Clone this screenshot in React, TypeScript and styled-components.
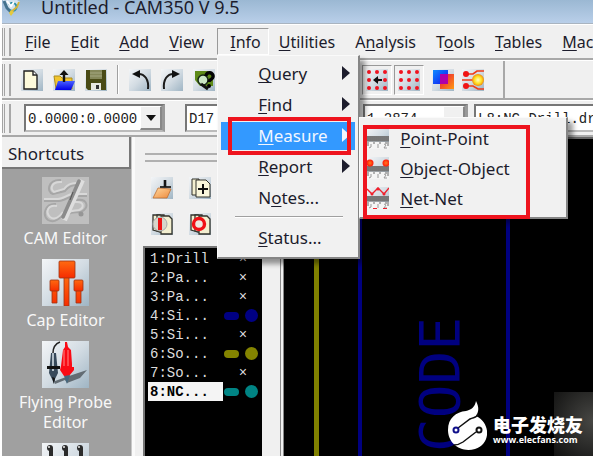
import React from "react";
import styled, { createGlobalStyle, css } from "styled-components";

const ui = `"Noto Sans", "Open Sans", sans-serif`;
const mono = `"Liberation Mono", "DejaVu Sans Mono", monospace`;

const Global = createGlobalStyle`
  * { box-sizing: border-box; }
  html, body { margin: 0; background: #fff; overflow: hidden; }
  button, input, select { font: inherit; color: inherit; border: 0; padding: 0; margin: 0; background: none; border-radius: 0; }
  svg { display: block; }
  u { text-underline-offset: 2px; text-decoration-skip-ink: none; }
`;

const Window = styled.div`
  display: flex;
  flex-direction: column;
  height: 100vh;
  margin-left: 2px;
  overflow: hidden;
  background: #f0f0f0;
  font-family: ${ui};
  font-size: 16px;
  color: #1c1c2c;
`;

const TitleBar = styled.header`
  display: flex;
  flex: none;
  gap: 20px;
  height: 24px;
  background: linear-gradient(#9bb8d3, #b9cfe9);
  border-bottom: 1px solid #a9b4c0;
`;

const Title = styled.h1`
  margin: 0;
  font-size: 18px;
  font-weight: 400;
  line-height: 14px;
  white-space: nowrap;
`;

const Bar = styled.div<{ $height: number }>`
  display: flex;
  flex: none;
  align-items: center;
  height: ${(p) => p.$height}px;
  border-top: 1px solid #fff;
  border-bottom: 2px solid #a8a8a8;
`;

const Grip = styled.span`
  flex: none;
  align-self: stretch;
  width: 9px;
  margin: 3px 0 2px;
  border-left: 3px double #a4a4a4;
  border-right: 2px solid #a8a8a8;
`;

const MenuBar = styled(Bar).attrs({ as: "nav" })`
  position: relative;
  z-index: 5;
`;

const Menus = styled.div`
  display: flex;
  padding-left: 4px;
`;

const MenuSlot = styled.div`
  position: relative;
  flex: none;
  margin-left: 3px;
`;

const MenuButton = styled.button<{ $open?: boolean }>`
  flex: none;
  height: 27px;
  padding: 0 10px;
  line-height: 24px;
  white-space: nowrap;
  ${(p) =>
    p.$open &&
    css`
      padding: 1px 7px 0 12px;
      border: 1px solid #fff;
      border-top-color: #999;
      border-left-color: #999;
    `}
`;

const menuPanel = css`
  position: absolute;
  z-index: 2;
  background: #f1f1f1;
  border: 1px solid #fafafa;
  border-right: 2px solid #858585;
  border-bottom: 2px solid #858585;
  box-shadow: 5px 5px 5px rgba(0, 0, 0, 0.4);
`;

const Dropdown = styled.div`
  ${menuPanel}
  top: 27px;
  left: 0;
  width: 143px;
  padding: 4px 3px 2px;
`;

const Submenu = styled.div`
  ${menuPanel}
  top: -5px;
  left: 138px;
  width: 209px;
  padding: 5px 7px 4px;
  color: #1c1c2c;
`;

const Row = styled.div<{ $active?: boolean }>`
  position: relative;
  margin-bottom: 3px;
  background: ${(p) => (p.$active ? "#3399ff" : "none")};
  color: ${(p) => (p.$active ? "#f2f6ff" : "inherit")};
`;

const Command = styled.button`
  display: flex;
  align-items: center;
  justify-content: space-between;
  width: 100%;
  height: 28px;
  padding: 0 5px 2px 37px;
  font-size: 17px;
  text-align: left;
`;

const SubCommand = styled(Command)`
  justify-content: flex-start;
  gap: 11px;
  height: 30px;
  padding: 0;
`;

const Separator = styled.hr`
  height: 2px;
  margin: 4px 12px 6px 14px;
  border: 0;
  border-top: 1px solid #a0a0a0;
  background: #fff;
`;

const Highlight = styled.span<{ $wide?: boolean }>`
  position: absolute;
  z-index: 3;
  inset: ${(p) => (p.$wide ? "7px 36px -2px 3px" : "-5px 4px -5px 7px")};
  border: 4px solid #ee141e;
  pointer-events: none;
`;

const Tools = styled.div`
  display: flex;
  align-items: center;
  gap: 10px;
  padding: 0 10px;
`;

const ToolButton = styled.button<{ $pressed?: boolean }>`
  flex: none;
  width: 22px;
  height: 22px;
  ${(p) =>
    p.$pressed &&
    css`
      display: grid;
      place-items: center;
      width: 30px;
      height: 30px;
      border: 1px solid #fff;
      border-top-color: #999;
      border-left-color: #999;
    `}
`;

const ToolDivider = styled.span`
  width: 2px;
  height: 29px;
  border-left: 1px solid #a0a0a0;
  background: #fff;
`;

const DisplayTools = styled(Tools)`
  align-self: stretch;
  gap: 8px;
  margin-left: 137px;
  padding: 0 19px 0 0;
  border-right: 2px solid #a8a8a8;
`;

const PressedPair = styled.div`
  display: flex;
  gap: 2px;
`;

const Fields = styled.div`
  display: flex;
  flex: 1;
  gap: 6px;
  padding-left: 13px;
  font-family: ${mono};
  font-size: 14px;
  color: #222;
`;

const Field = styled.div<{ $width?: number; $after?: number }>`
  display: flex;
  flex: ${(p) => (p.$width ? "none" : "1 0 140px")};
  width: ${(p) => (p.$width ? `${p.$width}px` : "auto")};
  height: 28px;
  margin-right: ${(p) => p.$after ?? 0}px;
  background: #fff;
  border: 2px solid #777;
  border-right: 3px solid #999;
  border-bottom-color: #bbb;

  input, select {
    flex: 1;
    min-width: 0;
    padding: 2px 0 0 2px;
    appearance: none;
    outline: 0;
  }
`;

const FieldArrow = styled.button`
  display: grid;
  place-items: center;
  flex: none;
  width: 22px;
  background: #f0f0f0;
  border: 1px solid #fff;
  border-right: 2px solid #888;
  border-bottom: 2px solid #888;
`;

const Body = styled.main`
  display: flex;
  flex: 1;
  min-height: 0;
`;

const Sidebar = styled.aside`
  flex: none;
  width: 130px;
  overflow: hidden;
  background: #a0a0a0;
  border-right: 1px solid #c8c8c8;
`;

const SidebarHeading = styled.h2`
  margin: 0;
  height: 32px;
  padding: 3px 6px 0;
  background: #f0f0f0;
  border-right: 2px solid #777;
  border-bottom: 2px solid #777;
  font-size: 17px;
  font-weight: 400;
  line-height: 28px;
`;

const Shortcut = styled.button`
  display: flex;
  flex-direction: column;
  align-items: center;
  gap: 4px;
  width: 100%;
  padding: 0 10px 0 8px;
  margin-top: 11px;
  color: #f8f8f8;
  font-size: 16px;
  line-height: 20px;

  &:first-of-type { margin-top: 8px; }
`;

const LayerPane = styled.section`
  display: flex;
  flex-direction: column;
  flex: none;
  width: 152px;
  padding: 0 18px 0 8px;
  border-left: 3px solid #fafafa;
  border-right: 4px double #888;
  background: #f0f0f0;
`;

const PaneGrip = styled.div`
  flex: none;
  height: 9px;
  margin: 16px 45px 0 2px;
  border-top: 2px solid #b0b0b0;
  border-bottom: 2px solid #b0b0b0;
`;

const LayerTools = styled.div`
  display: grid;
  grid-template-columns: 22px 22px;
  gap: 14px 16px;
  padding: 15px 8px 11px;
`;

const LayerList = styled.ul`
  flex: 1;
  min-height: 0;
  width: 119px;
  margin: 0;
  padding: 1px 0 0 3px;
  overflow: hidden;
  list-style: none;
  background: #000;
  border-top: 2px solid #777;
  border-left: 2px solid #777;
  color: #dcdcdc;
  font-family: ${mono};
  font-size: 14px;
`;

const Layer = styled.li`
  display: flex;
  align-items: center;
  height: 19px;
`;

const LayerName = styled.button<{ $selected?: boolean }>`
  width: 75px;
  height: 19px;
  padding-left: 2px;
  text-align: left;
  white-space: nowrap;
  background: ${(p) => (p.$selected ? "#f4f4f4" : "none")};
  color: ${(p) => (p.$selected ? "#000" : "inherit")};
  font-weight: ${(p) => (p.$selected ? 700 : 400)};
`;

const LayerMark = styled.span<{ $color?: string }>`
  display: flex;
  flex: 1;
  align-items: center;
  justify-content: ${(p) => (p.$color ? "flex-start" : "center")};
  gap: 6px;
  padding-left: 1px;
  color: ${(p) => p.$color ?? "#dcdcdc"};
`;

const Trace = styled.i`
  width: 15px;
  height: 8px;
  border-radius: 4px;
  background: currentColor;
`;

const Pad = styled.i`
  width: 13px;
  height: 13px;
  border-radius: 50%;
  background: currentColor;
`;

const Canvas = styled.section`
  position: relative;
  flex: 1;
  min-width: 0;
  overflow: hidden;
  background: #000;
  border-top: 2px solid #666;
`;

const Glow = styled.div`
  position: absolute;
  right: 0;
  bottom: 0;
  width: 39px;
  height: 64px;
  background: radial-gradient(circle at 100% 45%, #474744, #1b1b1a 80%, #111);
`;

const Brand = styled.div`
  position: absolute;
  right: 10px;
  bottom: 6px;
  display: flex;
  align-items: flex-end;
  gap: 6px;
  color: #fff;
  white-space: nowrap;
`;

const BrandText = styled.div`
  display: flex;
  flex-direction: column;
  padding-bottom: 4px;

  strong {
    font: 900 18px/20px "Noto Sans CJK SC", sans-serif;
  }
  a {
    color: inherit;
    text-decoration: none;
    font: 700 9px/12px "Open Sans", sans-serif;
  }
`;

/* Label with its keyboard accelerator underlined */
const Accel = ({ text, at = 0 }: { text: string; at?: number }) => (
  <span>
    {text.slice(0, at)}
    <u>{text[at]}</u>
    {text.slice(at + 1)}
  </span>
);

const Arrow = () => (
  <svg width="8" height="14" viewBox="0 0 8 14" fill="currentColor" aria-hidden="true">
    <path d="M0 0 8 7 0 14Z" />
  </svg>
);

const Tile = ({ children, size = 22 }: { children: React.ReactNode; size?: number }) => (
  <svg width={size} height={size} viewBox={`0 0 ${size} ${size}`} aria-hidden="true">
    <rect width={size} height={size} fill="url(#tile)" />
    {children}
  </svg>
);

const Defs = () => (
  <svg width="0" height="0" aria-hidden="true">
    <defs>
      <linearGradient id="tile" x2="1" y2="1">
        <stop offset="0" stopColor="#f3f5f7" />
        <stop offset="0.5" stopColor="#d3dce3" />
        <stop offset="1" stopColor="#9fb5c4" />
      </linearGradient>
      <linearGradient id="folder" y2="1" x2="0">
        <stop offset="0" stopColor="#4a63ff" />
        <stop offset="1" stopColor="#0000e8" />
      </linearGradient>
      <linearGradient id="orange" y2="1" x2="1">
        <stop offset="0" stopColor="#ffd9a0" />
        <stop offset="1" stopColor="#ee8a3c" />
      </linearGradient>
      <linearGradient id="cap" y2="1" x2="0">
        <stop offset="0" stopColor="#ff6a10" />
        <stop offset="1" stopColor="#f62c00" />
      </linearGradient>
      <linearGradient id="blueSq" x2="1" y2="1">
        <stop offset="0" stopColor="#0e8cff" />
        <stop offset="1" stopColor="#1010f0" />
      </linearGradient>
      <linearGradient id="warmSq" x2="1" y2="1">
        <stop offset="0" stopColor="#e8103c" />
        <stop offset="1" stopColor="#ff9a10" />
      </linearGradient>
      <radialGradient id="sun">
        <stop offset="0" stopColor="#fffcc0" />
        <stop offset="0.6" stopColor="#ffe020" />
        <stop offset="1" stopColor="#f08a10" />
      </radialGradient>
      <radialGradient id="ball">
        <stop offset="0" stopColor="#ff7a20" />
        <stop offset="1" stopColor="#ff1808" />
      </radialGradient>
    </defs>
  </svg>
);

const AppIcon = () => (
  <svg width="19" height="17" viewBox="0 0 19 17" fill="none" aria-hidden="true">
    <path d="M1 0 4 8 9 13 15 9 18 2 15 0Z" fill="#d2e2ee" />
    <path d="m2 1 3 7 5 5" stroke="#45728e" strokeWidth="3" />
    <path d="M7 5a4 4 0 1 1 1 5" stroke="#268ba5" strokeWidth="2" />
    <path d="m9 12 6-5 2-5" stroke="#d5b53a" strokeWidth="2" />
    <path d="m9 10 3 2-3 4-2-3Z" fill="#e4c93c" />
    <path d="m5 1 4 5 3-4" stroke="#fff" strokeWidth="2" />
  </svg>
);

const NewIcon = () => (
  <Tile>
    <path d="M3 2h9l4 4v14H3Z" fill="#fdfadb" stroke="#222" strokeWidth="1.4" />
    <path d="M12 2v4h4" fill="#fff" stroke="#222" strokeWidth="1.4" />
  </Tile>
);
const OpenIcon = () => (
  <Tile>
    <path d="M1 7h6l2 2h10v11H3Z" fill="#f1c52f" stroke="#ad8b1b" />
    <path d="M5 12h17l-4 9H2Z" fill="url(#folder)" />
    <path d="M11 13V4" stroke="#111" strokeWidth="2.4" />
    <path d="m6.500 6 4.500-5 4.500 5Z" fill="#111" />
  </Tile>
);
const SaveIcon = () => (
  <Tile>
    <path d="M1 1h20v20H3l-2-2Z" fill="#4a4b16" />
    <path d="M5 1h12v9H5Z" fill="#85885a" />
    <path d="M5 4h12M5 7h12" stroke="#a4a780" />
    <path d="M6 14h10v7H6Z" fill="#e8e8e0" />
    <path d="M11 16h3v4h-3Z" fill="#333" />
  </Tile>
);
const CurveIcon = ({ flip }: { flip?: boolean }) => (
  <Tile>
    <g transform={flip ? "matrix(-1 0 0 1 22 0)" : undefined}>
      <path d="M8 5c8-1 12 6 11 15" fill="none" stroke="#1b1b1b" strokeWidth="2" />
      <path d="m3 5 8-4v8Z" fill="#111" />
    </g>
  </Tile>
);
const SearchIcon = () => (
  <Tile>
    <path d="M2 2h13l5 5v10H7l-5-6Z" fill="#5e8a18" />
    <circle cx="10" cy="11" r="5" fill="#cbe6c5" stroke="#172817" strokeWidth="1.5" />
    <path d="m8 15 7 5" stroke="#111" strokeWidth="3" />
    <path d="M13 7c0-5 8-4 7 1-.5 3-4 2-4 5" fill="none" stroke="#050505" strokeWidth="3.4" />
    <circle cx="16" cy="17" r="2" />
  </Tile>
);
const DotsIcon = ({ arrow }: { arrow?: boolean }) => (
  <Tile>
    {[3, 11, 19].map((y) =>
      [3, 11, 19].map((x) => <circle key={`${x}-${y}`} cx={x} cy={y} r="2" fill="#f01420" />)
    )}
    {arrow && (
      <g fill="#111">
        <path d="M7 11 12 7v8Z" />
        <path d="M11 10h5v2h-5Z" />
      </g>
    )}
  </Tile>
);
const OverlapIcon = () => (
  <Tile>
    <path d="M8 5h14v15H8Z" fill="url(#warmSq)" />
    <path d="M1 1h15v14H1Z" fill="url(#blueSq)" />
    <path d="M8 5h8v10H8Z" fill="#b000a8" />
  </Tile>
);
const NetIcon = () => (
  <Tile>
    <g fill="none" stroke="#f03a18" strokeWidth="1.6">
      <path d="M4 5h7l4-3h7M0 11h12M4 17h7l5 3h6" />
    </g>
    <circle cx="4" cy="5" r="3" fill="#f01414" />
    <circle cx="4" cy="17" r="3" fill="#f01414" />
    <circle cx="16" cy="11" r="6" fill="url(#sun)" />
  </Tile>
);

const RulerIcon = ({ kind }: { kind: "point" | "object" | "net" }) => (
  <Tile>
    <rect y="15" width="22" height="7" fill="#f5f5f5" />
    <rect y="9" width="22" height="5" fill="#858585" />
    <path
      d="M1 9v10M3 9v6M5 9v6M7 9v8M9 9v6M11 9v6M13 9v8M15 9v6M17 9v6M19 9v8M21 9v10"
      stroke="#6b6b6b"
    />
    <path d="M4 17v3l-2 1M11 17v4M17 17l2 1-2 3h3" fill="none" stroke="#999" />
    {kind === "object" && (
      <g fill="url(#ball)">
        <circle cx="3" cy="6" r="3.500" />
        <circle cx="19" cy="6" r="3.500" />
      </g>
    )}
    {kind === "net" && (
      <g>
        <path d="m0 2 5 5 6-6 6 6 5-6" fill="none" stroke="#f0202c" strokeWidth="1.400" />
        <g fill="#f0202c">
          <circle cx="5" cy="7" r="1.500" />
          <circle cx="11" cy="2" r="1.500" />
          <circle cx="17" cy="7" r="1.500" />
          <path d="M6 21h4v1H6ZM16 21h4v1h-4Z" />
        </g>
      </g>
    )}
  </Tile>
);

const Sheets = () => (
  <g fill="#f3efd0" stroke="#33332c" strokeWidth="1.300">
    <path d="M2 2h7v17l-7-2Z" />
    <path d="M6 2h7v18l-7-2Z" />
    <path d="M10 3h8l3 3v15H10Z" />
  </g>
);
const BrushIcon = () => (
  <Tile>
    <path d="m7 11 13 1-4 9H2Z" fill="url(#orange)" stroke="#bd6f34" strokeWidth="0.8" />
    <path d="M9 10h11" stroke="#333" strokeWidth="2" />
    <path d="M14 3v7" stroke="#161616" strokeWidth="2.600" />
  </Tile>
);
const AddLayerIcon = () => (
  <Tile>
    <path d="M3 2h7v16H3Z" fill="#f3efd0" stroke="#33332c" />
    <path d="M7 3h10l4 4v13H7Z" fill="#faf7dc" stroke="#33332c" />
    <path d="M14 7v10M9 12h10" stroke="#111" strokeWidth="2" />
  </Tile>
);
const BarLayerIcon = () => (
  <Tile>
    <Sheets />
    <circle cx="9" cy="11" r="7" fill="#d7d6cb" stroke="#aaa" />
    <path d="M7 5h4v12H7Z" fill="#ee1414" />
  </Tile>
);
const RingLayerIcon = () => (
  <Tile>
    <Sheets />
    <circle cx="10" cy="11" r="5.500" fill="#eee8e0" stroke="#f01016" strokeWidth="3.400" />
  </Tile>
);

const CamIcon = () => (
  <svg width="47" height="47" viewBox="0 0 47 47" fill="none" aria-hidden="true">
    <rect width="47" height="47" fill="#bfbfbf" />
    <g strokeWidth="2">
      <path d="M19 3c-13-1-15 12-8 14l12-3c4-5 7-6 12-6M2 24h15c5 0 9-4 14-5h14M14 27C3 26 0 38 6 43c7 4 12-2 17-8M34 23c13-2 13 9 5 12-5 1-10-1-13 3" stroke="#a6a6a6" />
      <path d="M20 5C9 4 8 12 12 15l10-3c4-5 7-6 12-6M2 22h14c5 0 9-4 14-5h15M15 29C6 27 3 35 8 40c5 4 10-1 13-5M33 25c10-1 9 6 4 8-4 1-8 0-11 3" stroke="#d8d8d8" />
    </g>
    <path d="M40 3 22 43" stroke="#dedede" strokeWidth="6" />
    <path d="M37 4 21 40" stroke="#8b8b8b" strokeWidth="3.600" strokeLinecap="round" />
    <path d="m31 15-3 8" stroke="#555" />
    <circle cx="39" cy="37" r="2.500" fill="#969696" />
  </svg>
);

const CapIcon = () => (
  <Tile size={47}>
    <g fill="url(#cap)" stroke="#9c3414" strokeWidth="0.8">
      <path d="M22 18h5v29h-5ZM10 31h5v13h-5ZM34 31h5v13h-5Z" />
      <rect x="17" y="2" width="16" height="17" rx="1" />
      <rect x="8" y="21" width="9" height="11" rx="1" />
      <rect x="32" y="21" width="9" height="11" rx="1" />
    </g>
  </Tile>
);

const ProbeIcon = () => (
  <Tile size={47}>
    <path d="m13 40 14-5 18-6-7 8-13 5-2-3-10 4Z" fill="#626c73" />
    <path d="M11 12c0-5 2-9 7-11" fill="none" stroke="#222" strokeWidth="1.500" />
    <path d="M9 12h5l2 20-3 6-1 5-2-5-3-6Z" fill="#37495a" />
    <path d="M11 12v18" stroke="#dde6ec" strokeWidth="1.500" />
    <path d="M5 25h13v3H5Z" fill="#111" />
    <path d="m10 36 3 1-1 6Z" fill="#111" />
    <path d="M23 1h2l1 5 3 3 1 14v3h2v3l-5 6h-5l-4-6 1-4 2-16 2-3Z" fill="#fa0a14" />
    <path d="m22 35 6-1-3 9Z" fill="#45677e" />
    <path d="M22 9v16M26 9v16" stroke="#ff8a85" />
  </Tile>
);

const PinsIcon = () => (
  <Tile size={47}>
    {[8, 23, 38].map((x) => (
      <g key={x} fill="#2b2b2b">
        <circle cx={x} cy="5" r="3" />
        <path d={`M${x - 1} 5h4v40h-4Z`} />
        <circle cx={x - 1} cy="4" r="1" fill="#eee" />
      </g>
    ))}
  </Tile>
);

const Flame = () => (
  <svg width="39" height="49" viewBox="0 0 39 49" aria-hidden="true">
    <path
      d="M28 0c3 6 3 10 0 15 15 7 15 28-1 33C12 52 0 42 0 29 0 17 8 11 18 10c5-1 9-4 10-10Z"
      fill="#fff"
    />
    <g fill="none" stroke="#111" strokeWidth="1.500">
      <path d="m10 27 12-9c4-2 7-1 8-5M28 31 15 41c-3 2-6 3-9 3" />
      <circle cx="31" cy="29" r="2.500" strokeWidth="2" />
      <circle cx="8" cy="29" r="2.500" stroke="#10108a" strokeWidth="2" />
    </g>
  </svg>
);

const BoardArt = () => (
  <svg width="1200" height="1200" aria-label="Board drawing">
    <path d="M32.500 0v1200" stroke="#808000" strokeWidth="5" />
    <path d="M76 0v1200M224 0v1200" stroke="#000080" strokeWidth="4" />
    <text
      transform="translate(175 313) rotate(-90)"
      fill="#000080"
      fontFamily="DejaVu Sans Mono, monospace"
      fontSize="56"
    >
      CODE
    </text>
  </svg>
);

const layers: { name: string; color?: string }[] = [
  { name: "1:Drill" },
  { name: "2:Pa..." },
  { name: "3:Pa..." },
  { name: "4:Si...", color: "#000084" },
  { name: "5:Si..." },
  { name: "6:So...", color: "#848400" },
  { name: "7:So..." },
  { name: "8:NC...", color: "#008484" },
];

const shortcuts = [
  { label: "CAM Editor", icon: <CamIcon /> },
  { label: "Cap Editor", icon: <CapIcon /> },
  { label: "Flying Probe Editor", icon: <ProbeIcon /> },
  { label: "", icon: <PinsIcon /> },
];

const DownArrow = () => (
  <svg width="10" height="6" viewBox="0 0 10 6" aria-hidden="true">
    <path d="M0 0h10L5 6Z" fill="#111" />
  </svg>
);

const InfoMenu = () => (
  <MenuSlot>
    <MenuButton $open aria-expanded="true">
      <Accel text="Info" />
    </MenuButton>
    <Dropdown role="menu">
      <Row><Command role="menuitem"><Accel text="Query" /><Arrow /></Command></Row>
      <Row><Command role="menuitem"><Accel text="Find" /><Arrow /></Command></Row>
      <Row $active>
        <Command role="menuitem" aria-expanded="true"><Accel text="Measure" /><Arrow /></Command>
        <Highlight />
        <Submenu role="menu">
          <SubCommand role="menuitem"><RulerIcon kind="point" /><Accel text="Point-Point" /></SubCommand>
          <SubCommand role="menuitem"><RulerIcon kind="object" /><Accel text="Object-Object" /></SubCommand>
          <SubCommand role="menuitem"><RulerIcon kind="net" /><Accel text="Net-Net" /></SubCommand>
          <Highlight $wide />
        </Submenu>
      </Row>
      <Row><Command role="menuitem"><Accel text="Report" /><Arrow /></Command></Row>
      <Row><Command role="menuitem"><Accel text="Notes..." at={1} /></Command></Row>
      <Separator />
      <Row><Command role="menuitem"><Accel text="Status..." /></Command></Row>
    </Dropdown>
  </MenuSlot>
);

export default function App() {
  return (
    <Window>
      <Global />
      <TitleBar>
        <AppIcon />
        <Title>Untitled - CAM350 V 9.5</Title>
      </TitleBar>

      <MenuBar $height={36}>
        <Grip />
        <Menus>
          <MenuButton><Accel text="File" /></MenuButton>
          <MenuButton><Accel text="Edit" /></MenuButton>
          <MenuButton><Accel text="Add" /></MenuButton>
          <MenuButton><Accel text="View" /></MenuButton>
          <InfoMenu />
          <MenuButton><Accel text="Utilities" /></MenuButton>
          <MenuButton><Accel text="Analysis" at={1} /></MenuButton>
          <MenuButton><Accel text="Tools" at={1} /></MenuButton>
          <MenuButton><Accel text="Tables" /></MenuButton>
          <MenuButton><Accel text="Macro" /></MenuButton>
        </Menus>
      </MenuBar>

      <Bar $height={40}>
        <Grip />
        <Tools>
          <ToolButton aria-label="New"><NewIcon /></ToolButton>
          <ToolButton aria-label="Open"><OpenIcon /></ToolButton>
          <ToolButton aria-label="Save"><SaveIcon /></ToolButton>
          <ToolDivider />
          <ToolButton aria-label="Undo"><CurveIcon /></ToolButton>
          <ToolButton aria-label="Redo"><CurveIcon flip /></ToolButton>
          <ToolButton aria-label="Query"><SearchIcon /></ToolButton>
        </Tools>
        <DisplayTools>
          <PressedPair>
            <ToolButton $pressed aria-label="Snap to grid"><DotsIcon arrow /></ToolButton>
            <ToolButton $pressed aria-label="Show grid"><DotsIcon /></ToolButton>
          </PressedPair>
          <ToolButton aria-label="Transparency"><OverlapIcon /></ToolButton>
          <ToolButton aria-label="Highlight net"><NetIcon /></ToolButton>
        </DisplayTools>
      </Bar>

      <Bar $height={37}>
        <Grip />
        <Fields>
          <Field $width={141} $after={14}>
            <input aria-label="Coordinates" defaultValue="0.0000:0.0000" />
            <FieldArrow aria-label="Recent coordinates"><DownArrow /></FieldArrow>
          </Field>
          <Field $width={172}>
            <select aria-label="Aperture"><option>D17</option></select>
          </Field>
          <Field $width={105}>
            <select aria-label="Grid"><option>1.2874</option></select>
            <FieldArrow aria-label="Grid sizes" />
          </Field>
          <Field>
            <select aria-label="Active layer"><option>L8:NC_Drill.drl</option></select>
          </Field>
        </Fields>
      </Bar>

      <Body>
        <Sidebar>
          <SidebarHeading>Shortcuts</SidebarHeading>
          {shortcuts.map((s) => (
            <Shortcut key={s.label} aria-label={s.label || "Fixture Editor"}>
              {s.icon}
              {s.label}
            </Shortcut>
          ))}
        </Sidebar>
        <LayerPane>
          <PaneGrip />
          <LayerTools>
            <ToolButton aria-label="Redraw"><BrushIcon /></ToolButton>
            <ToolButton aria-label="Add layer"><AddLayerIcon /></ToolButton>
            <ToolButton aria-label="Layer traces"><BarLayerIcon /></ToolButton>
            <ToolButton aria-label="Layer pads"><RingLayerIcon /></ToolButton>
          </LayerTools>
          <LayerList>
            {layers.map((l, i) => (
              <Layer key={l.name}>
                <LayerName $selected={i === 7}>{l.name}</LayerName>
                <LayerMark $color={l.color}>{l.color ? <><Trace /><Pad /></> : "×"}</LayerMark>
              </Layer>
            ))}
          </LayerList>
        </LayerPane>
        <Canvas>
          <BoardArt />
          <Glow />
          <Brand>
            <Flame />
            <BrandText>
              <strong>电子发烧友</strong>
              <a href="http://www.elecfans.com">www.elecfans.com</a>
            </BrandText>
          </Brand>
        </Canvas>
      </Body>
      <Defs />
    </Window>
  );
}
